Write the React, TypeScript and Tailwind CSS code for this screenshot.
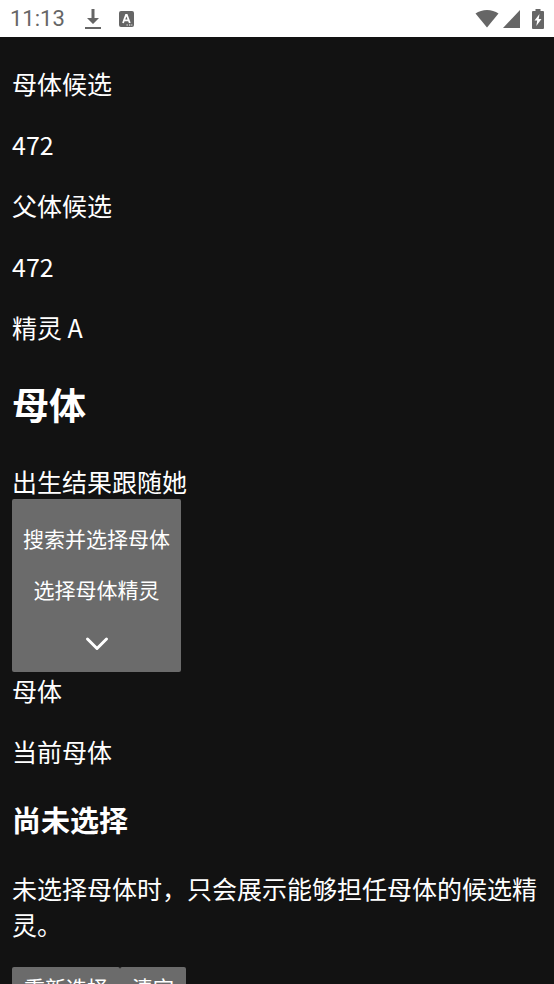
import type { ReactNode } from "react";

function StatusBar() {
  return (
    <header className="flex h-[37px] shrink-0 items-center bg-white px-2.5 font-['Roboto',sans-serif] text-[#666666]">
      <time className="text-[22px] leading-[26px]">11:13</time>
      <svg className="ml-5 h-5 w-4" viewBox="0 0 16 20" fill="currentColor" aria-hidden="true">
        <path d="M6.500 0h3v9H14l-6 6-6-6h4.500zM0 18h16v2H0z" />
      </svg>
      <svg className="ml-[18px] h-4 w-[15px]" viewBox="0 0 15 16" aria-hidden="true">
        <rect width="15" height="16" rx="2" fill="currentColor" />
        <path d="M4 12 7 4h.8l3 8M5.200 9.300h4.400" fill="none" stroke="#fff" strokeWidth="1.800" />
        <path d="M7.500 14h1.300M10 14h1.300M12.300 14h1" stroke="#fff" strokeWidth="1" />
      </svg>
      <div className="ml-auto flex items-center">
        <svg className="h-5 w-6" viewBox="0 0 24 20" fill="currentColor" aria-hidden="true">
          <path d="M0.500 4.500C7-.3 17-.3 23.500 4.500L12 18.500z" />
        </svg>
        <svg className="ml-1 h-[18px] w-[17px]" viewBox="0 0 17 18" fill="currentColor" aria-hidden="true">
          <path d="M17 0v18H0z" />
        </svg>
        <svg className="ml-3 h-5 w-3" viewBox="0 0 12 20" aria-hidden="true">
          <path d="M3.500 0h5v2H11q1 0 1 1v16q0 1-1 1H1q-1 0-1-1V3q0-1 1-1h2.500z" fill="currentColor" />
          <path d="M7.500 5 2.500 11.500h2.700L4.300 17 9.500 10H6.700z" fill="#fff" />
        </svg>
      </div>
    </header>
  );
}

function Text({ children }: { children: ReactNode }) {
  return <p className="my-[25px]">{children}</p>;
}

function ActionButton({ children }: { children: ReactNode }) {
  return (
    <button type="button" className="rounded-xs bg-[#6b6b6b] px-3 py-[5px] text-[21px] leading-[30px]">
      {children}
    </button>
  );
}

export default function App() {
  return (
    <div className="flex h-screen flex-col bg-[#121212] font-['Noto_Sans_CJK_SC',sans-serif] text-white">
      <StatusBar />
      <main className="min-h-0 flex-1 overflow-y-auto px-3 pt-[3px] text-[25px] leading-[36px] [scrollbar-width:none]">
        <Text>母体候选</Text>
        <Text>472</Text>
        <Text>父体候选</Text>
        <Text>472</Text>
        <Text>精灵 A</Text>
        <h2 className="my-[31px] text-[37px] leading-[56px] font-bold">母体</h2>
        <section>
          <p>出生结果跟随她</p>
          <button
            type="button"
            className="flex flex-col items-center gap-[21px] rounded-xs bg-[#6b6b6b] px-[11px] pt-6 pb-[19px] text-[21px] leading-[30px]"
          >
            <span>搜索并选择母体</span>
            <span>选择母体精灵</span>
            <svg
              className="h-7 w-6"
              viewBox="0 0 24 28"
              fill="none"
              stroke="currentColor"
              strokeWidth="3"
              strokeLinecap="round"
              strokeLinejoin="round"
              aria-hidden="true"
            >
              <path d="m2.500 14 9.500 9.500 9.500-9.500" />
            </svg>
          </button>
          <p>母体</p>
        </section>
        <Text>当前母体</Text>
        <h3 className="my-[29px] text-[29px] leading-[43px] font-bold">尚未选择</h3>
        <Text>未选择母体时，只会展示能够担任母体的候选精灵。</Text>
        <div className="flex">
          <ActionButton>重新选择</ActionButton>
          <ActionButton>清空</ActionButton>
        </div>
      </main>
    </div>
  );
}
